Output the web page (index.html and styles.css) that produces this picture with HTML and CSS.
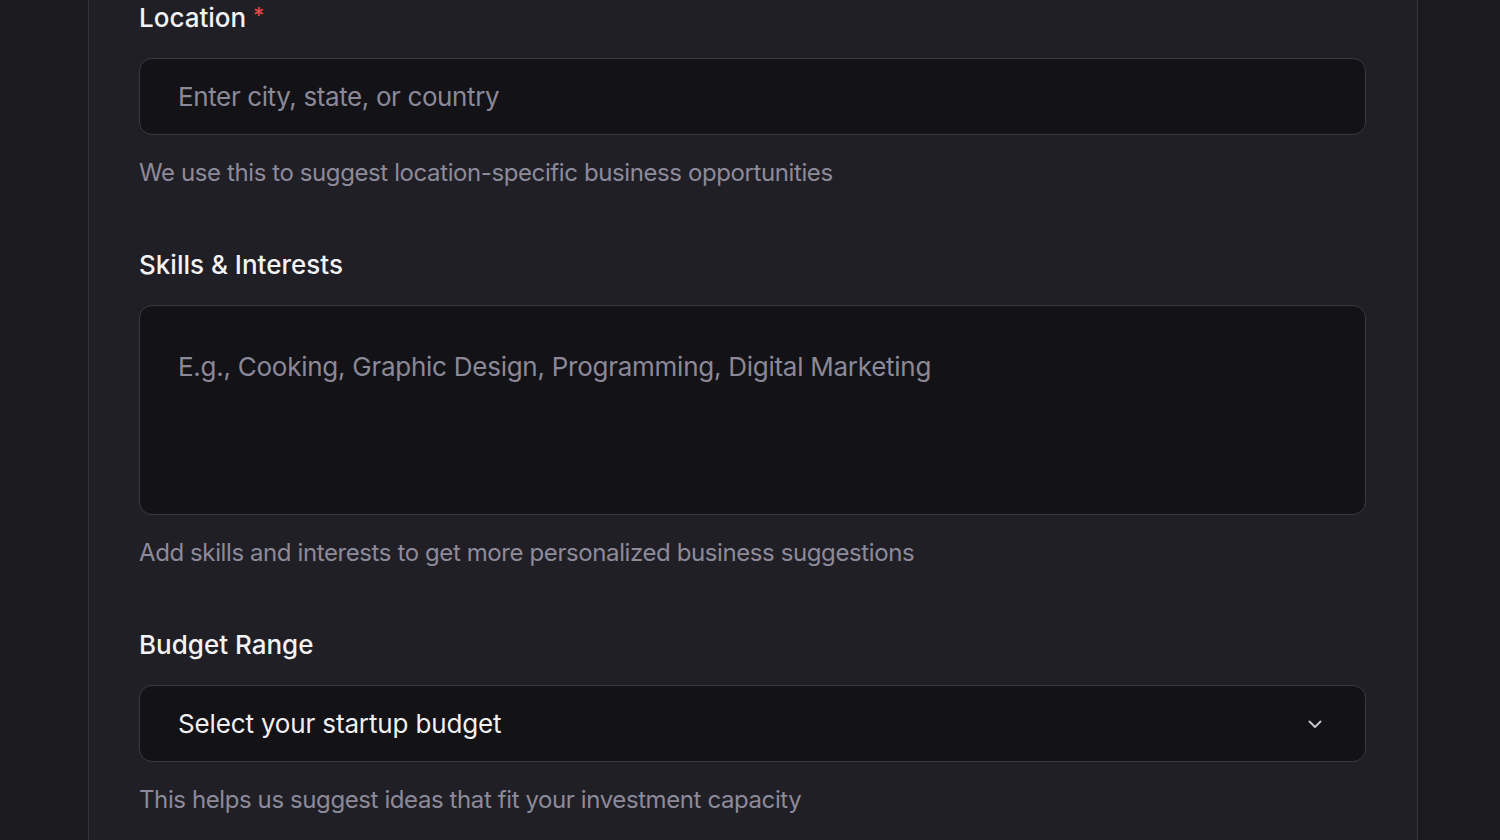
FILE: index.html
```html
<!DOCTYPE html>
<html lang="en">
<head>
<meta charset="utf-8">
<title>Business profile form</title>
<link rel="stylesheet" href="styles.css">
</head>
<body>
<main class="page">
  <section class="card">
    <div class="field">
      <label class="label" for="loc">Location <span class="req">*</span></label>
      <input id="loc" class="control" type="text" placeholder="Enter city, state, or country">
      <p class="help">We use this to suggest location-specific business opportunities</p>
    </div>
    <div class="field">
      <label class="label" for="skills">Skills &amp; Interests</label>
      <textarea id="skills" class="control area" placeholder="E.g., Cooking, Graphic Design, Programming, Digital Marketing"></textarea>
      <p class="help">Add skills and interests to get more personalized business suggestions</p>
    </div>
    <div class="field">
      <label class="label">Budget Range</label>
      <div class="control select">
        <span class="select-text">Select your startup budget</span>
        <svg class="chev" width="20" height="20" viewBox="0 0 20 20" fill="none" stroke="currentColor" stroke-width="2" stroke-linecap="round" stroke-linejoin="round"><path d="M4.5 7.5l5.5 5.5 5.5-5.5"/></svg>
      </div>
      <p class="help">This helps us suggest ideas that fit your investment capacity</p>
    </div>
  </section>
</main>
</body>
</html>
```

FILE: styles.css
```css
* { box-sizing: border-box; }
html, body { margin: 0; padding: 0; }
body {
  background: #1b1a1f;
  font-family: Inter, "Noto Sans", sans-serif;
  width: 1500px;
  height: 840px;
  overflow: hidden;
}
.page {
  padding-left: 88px;
  width: 1500px;
}
.card {
  width: 1330px;
  height: 840px;
  background: #201f25;
  border-left: 1px solid #34333a;
  border-right: 1px solid #34333a;
  padding: 0 51px 0 50px;
  display: flex;
  flex-direction: column;
  gap: 56px;
}
.field {
  display: flex;
  flex-direction: column;
}
.field:first-child { margin-top: -3px; }
.label {
  font-size: 26px;
  line-height: 36px;
  color: #f3f3f5;
  font-weight: 500;
  margin-bottom: 22px;
}
.req { color: #e5484d; font-size: 22px; vertical-align: 4px; }
.control {
  width: 100%;
  height: 77px;
  background: #131217;
  border: 1px solid #3a3940;
  border-radius: 13px;
  padding: 0 38px;
  font-family: inherit;
  font-size: 26px;
  letter-spacing: -0.38px;
  color: #f0f0f2;
  outline: none;
}
.control::placeholder { color: #8b8997; opacity: 1; }
.area {
  height: 210px;
  resize: none;
  padding-top: 43px;
  line-height: 36px;
  letter-spacing: -0.26px;
  display: block;
}
.select {
  display: flex;
  align-items: center;
  justify-content: space-between;
  padding-right: 40px;
  letter-spacing: -0.15px;
}
.select-text { color: #f0f0f2; }
.chev { color: #c4c3cb; }
.help {
  margin: 20px 0 0;
  font-size: 24px;
  line-height: 36px;
  letter-spacing: -0.4px;
  color: #8d8a9b;
}
```
